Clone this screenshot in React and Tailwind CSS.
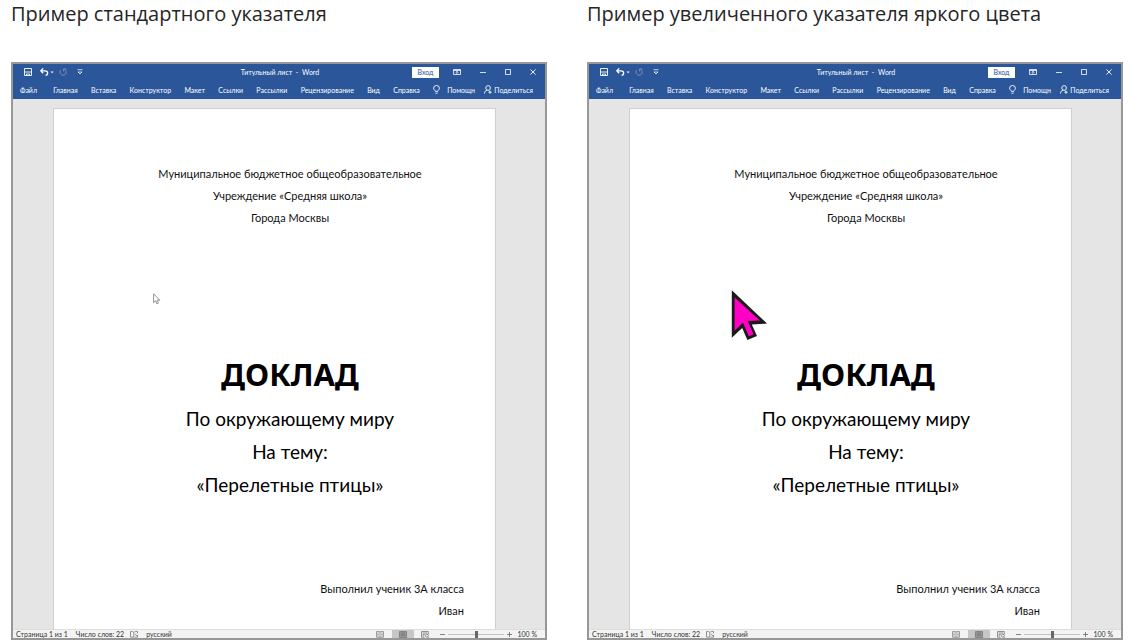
const menuItems = [
  'Главная',
  'Вставка',
  'Конструктор',
  'Макет',
  'Ссылки',
  'Рассылки',
  'Рецензирование',
  'Вид',
  'Справка',
];

function SaveIcon() {
  return (
    <svg className="h-2 w-2" viewBox="0 0 8 8" fill="none" stroke="currentColor" aria-hidden="true">
      <path d="M.5.5h7v7h-7zM.5 4h7M2.5 7.4V6h3v1.4" strokeWidth=".9" />
    </svg>
  );
}

function UndoIcon() {
  return (
    <svg className="h-2 w-[14px]" viewBox="0 0 14 8" fill="none" stroke="currentColor" aria-hidden="true">
      <path d="M3.2.4.8 2.8l2.4 2.4M1 2.8h4.2c3.2 0 3.2 4.2.4 4.6" strokeWidth="1.3" />
      <path d="M10.6 3.4h3l-1.5 1.8z" fill="currentColor" stroke="none" />
    </svg>
  );
}

function RedoIcon() {
  return (
    <svg className="h-2 w-2" viewBox="0 0 8 8" fill="none" stroke="currentColor" aria-hidden="true">
      <path d="M4.6 1A3.1 3.1 0 1 1 1.6 2.2M4.6 3.3V1h2.8" />
    </svg>
  );
}

function CustomizeIcon() {
  return (
    <svg className="h-[6px] w-[6px]" viewBox="0 0 6 6" fill="none" stroke="currentColor" aria-hidden="true">
      <path d="M.5.7h5M1 3h4L3 5z" strokeWidth=".7" />
    </svg>
  );
}

function BulbIcon() {
  return (
    <svg className="h-[9px] w-[7px]" viewBox="0 0 7 9" fill="none" stroke="currentColor" aria-hidden="true">
      <path d="M2.3 6.4C2.3 5.2.6 4.8.6 3.2a2.9 2.7 0 0 1 5.8 0c0 1.6-1.7 2-1.7 3.2zM2.4 8.2h2.2" strokeWidth=".9" />
    </svg>
  );
}

function ShareIcon() {
  return (
    <svg className="h-[9px] w-2" viewBox="0 0 8 9" fill="none" stroke="currentColor" aria-hidden="true">
      <path d="M6.4 3a2.3 2.4 0 1 0-4.6 0 2.3 2.4 0 0 0 4.6 0M.4 8.6c.2-2 1.2-3.2 2.8-3.3M4.4 7.2h3.2M6 5.6v3.2" strokeWidth=".9" />
    </svg>
  );
}

function TitleBar() {
  return (
    <div className="flex h-4 items-center pl-[11px] pr-[9px]">
      <div className="flex flex-1 items-center">
        <button aria-label="Сохранить"><SaveIcon /></button>
        <button aria-label="Отменить" className="ml-2"><UndoIcon /></button>
        <button aria-label="Повторить" className="ml-[5px] opacity-35"><RedoIcon /></button>
        <button aria-label="Настройка панели" className="ml-[10px]"><CustomizeIcon /></button>
      </div>
      <p className="whitespace-pre">Титульный лист  -  Word</p>
      <div className="flex flex-1 items-center justify-end">
        <button className="mr-[14px] h-[11px] w-[27px] bg-white leading-[11px] text-[#2b579a]">Вход</button>
        <button aria-label="Параметры ленты" className="mr-[19px]">
          <svg className="h-[6px] w-2" viewBox="0 0 8 6" fill="none" stroke="currentColor" aria-hidden="true">
            <path d="M.5.5h7v5h-7zM.5 1.5h7M4 5V2.3M2.8 3.6 4 2.4l1.2 1.2" strokeWidth=".8" />
          </svg>
        </button>
        <button aria-label="Свернуть" className="mr-[19px]">
          <svg className="h-[6px] w-[6px]" viewBox="0 0 6 6" stroke="currentColor" aria-hidden="true"><path d="M0 3.5h6" strokeWidth=".8" /></svg>
        </button>
        <button aria-label="Развернуть" className="mr-[19px]">
          <svg className="h-[6px] w-[6px]" viewBox="0 0 6 6" fill="none" stroke="currentColor" aria-hidden="true"><path d="M.5.5h5v5h-5z" strokeWidth=".8" /></svg>
        </button>
        <button aria-label="Закрыть">
          <svg className="h-[6px] w-[6px]" viewBox="0 0 6 6" stroke="currentColor" aria-hidden="true"><path d="m.4.4 5.2 5.2M5.6.4.4 5.6" strokeWidth=".9" /></svg>
        </button>
      </div>
    </div>
  );
}

function Ribbon() {
  return (
    <nav className="flex h-[19px] items-center justify-between pl-[7px] pr-3">
      <button className="mr-[3px]">Файл</button>
      {menuItems.map((item) => (
        <button key={item}>{item}</button>
      ))}
      <button className="flex items-center gap-[7px]"><BulbIcon />Помощн</button>
      <button className="-ml-1 flex items-center gap-[2px]"><ShareIcon />Поделиться</button>
    </nav>
  );
}

function StatusBar() {
  return (
    <footer className="flex h-[9px] items-center border-t border-[#dcdcdc] bg-[#f3f3f3] pl-[3px] pr-2 text-[7px] leading-[8px] text-[#333333]">
      <span>Страница 1 из 1</span>
      <span className="ml-2">Число слов: 22</span>
      <svg className="ml-[6px] h-[7px] w-2" viewBox="0 0 8 7" fill="none" stroke="#777" aria-hidden="true">
        <path d="M3.8 1.2C2.8.4 1.6.4.5.5v5.6h3.3zM4.4 1c1-.6 2-.6 3.1-.5v2M4.6 6.2h2.9V4M5.2 3.2l2 2" strokeWidth=".8" />
      </svg>
      <button className="ml-2">русский</button>
      <div className="ml-auto flex items-center">
        <button aria-label="Режим чтения" className="mr-2">
          <svg className="h-[7px] w-2" viewBox="0 0 8 7" fill="none" stroke="#777" aria-hidden="true">
            <path d="M.5.5h2.7L4 1l.8-.5h2.7v5.8H4.8L4 6.6l-.8-.3H.5zM4 1v5.5M1.3 2h1.5M1.3 3.5h1.5M1.3 5h1.5M5.2 2h1.5M5.2 3.5h1.5M5.2 5h1.5" strokeWidth=".7" />
          </svg>
        </button>
        <button aria-label="Разметка страницы" className="mr-[7px] flex h-2 w-[22px] items-center justify-center bg-[#c6c6c6]">
          <svg className="h-[7px] w-2" viewBox="0 0 8 7" fill="#999" stroke="#777" aria-hidden="true">
            <path d="M.5.5h7v6h-7zM1.8 2h4.4M1.8 3.3h4.4M1.8 4.6h4.4" strokeWidth=".8" />
          </svg>
        </button>
        <button aria-label="Веб-документ" className="mr-[11px]">
          <svg className="h-[7px] w-2" viewBox="0 0 8 7" fill="none" stroke="#777" aria-hidden="true">
            <path d="M3.5 6.2h-3V.5h6.8v2.8M1.6 2h4.6M1.6 3.4h2.2M1.6 4.8h1.6M4.4 4.7a1.5 1.5 0 1 0 3 0 1.5 1.5 0 0 0-3 0M6.8 5.8l1 1" strokeWidth=".8" />
          </svg>
        </button>
        <button aria-label="Уменьшить">
          <svg className="h-[5px] w-[5px]" viewBox="0 0 5 5" stroke="#666" aria-hidden="true"><path d="M0 2.5h5" strokeWidth=".8" /></svg>
        </button>
        <input
          type="range"
          aria-label="Масштаб"
          defaultValue="50"
          className="mx-[3px] h-[7px] w-14 appearance-none bg-transparent [&::-webkit-slider-runnable-track]:h-px [&::-webkit-slider-runnable-track]:bg-[#c4c4c4] [&::-webkit-slider-thumb]:-mt-[3px] [&::-webkit-slider-thumb]:h-[7px] [&::-webkit-slider-thumb]:w-[3px] [&::-webkit-slider-thumb]:appearance-none [&::-webkit-slider-thumb]:bg-[#666666]"
        />
        <button aria-label="Увеличить">
          <svg className="h-[5px] w-[5px]" viewBox="0 0 5 5" stroke="#666" aria-hidden="true"><path d="M0 2.5h5M2.5 0v5" strokeWidth=".8" /></svg>
        </button>
        <span className="ml-[5px]">100 %</span>
      </div>
    </footer>
  );
}

function StandardPointer() {
  return (
    <svg className="absolute left-[99px] top-[184px] h-[12px] w-[8px]" viewBox="0 0 8 12" aria-hidden="true">
      <path d="M.6.8v8.8l2-1.8 1.3 3 1.5-.7-1.3-2.9h2.8z" fill="#fff" stroke="#777" strokeWidth=".8" />
    </svg>
  );
}

function LargePointer() {
  return (
    <svg className="absolute left-[101px] top-[180px] h-[53px] w-[38px]" viewBox="0 0 38 53" aria-hidden="true">
      <path d="M.8 1.2v47.6l10.4-9.7 5.2 12 9.6-4.1-5.2-11.4 15.2-1z" fill="#1a1a1a" />
      <path d="M3.6 8.6v33.1l8.4-8 5.8 13.5 4.8-2-5.8-13.2 12.2-.6z" fill="#ff00c4" />
    </svg>
  );
}

function WordWindow({ children }) {
  return (
    <div className="border-2 border-[#989898] bg-[#e5e5e5] font-['Lato','Noto_Sans',sans-serif]">
      <header className="bg-[#2b579a] text-[7px] leading-[10px] text-white">
        <TitleBar />
        <Ribbon />
      </header>
      <div className="pl-10 pr-[49px] pt-[9px]">
        <article className="relative border border-b-0 border-[#cfcfcf] bg-white pb-[7px] pl-[62px] pr-[31px] pt-[54px] text-center text-[11px] leading-[22px] text-[#111111]">
          <p>Муниципальное бюджетное общеобразовательное</p>
          <p>Учреждение «Средняя школа»</p>
          <p>Города Москвы</p>
          <h2 className="mt-[123px] font-['Noto_Sans',sans-serif] text-[31px] font-bold leading-[44px] text-black">ДОКЛАД</h2>
          <div className="mt-[6px] text-[19px] leading-[33px] text-black">
            <p>По окружающему миру</p>
            <p>На тему:</p>
            <p>«Перелетные птицы»</p>
          </div>
          <div className="mt-[77px] text-right">
            <p>Выполнил ученик 3А класса</p>
            <p>Иван</p>
          </div>
          {children}
        </article>
      </div>
      <StatusBar />
    </div>
  );
}

export default function App() {
  return (
    <main className="grid grid-cols-2 gap-10 bg-white pl-[11px] pr-[15px] font-['Open_Sans',sans-serif]">
      <section>
        <h1 className="mb-[34px] whitespace-nowrap text-[20px] leading-[28px] text-[#262626]">Пример стандартного указателя</h1>
        <WordWindow><StandardPointer /></WordWindow>
      </section>
      <section>
        <h1 className="mb-[34px] whitespace-nowrap text-[20px] leading-[28px] text-[#262626]">Пример увеличенного указателя яркого цвета</h1>
        <WordWindow><LargePointer /></WordWindow>
      </section>
    </main>
  );
}
